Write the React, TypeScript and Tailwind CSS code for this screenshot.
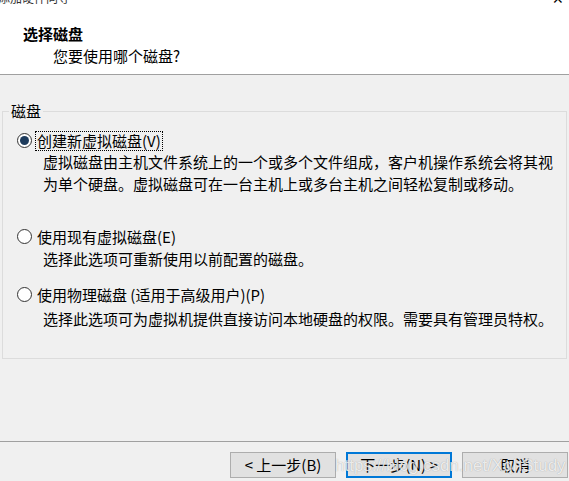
import React from 'react';

// Radio option in the disk wizard
const Radio = ({ checked }: { checked?: boolean }) => (
  <span className="flex h-[15px] w-[15px] flex-shrink-0 items-center justify-center rounded-full border border-[#333333] bg-white">
    {checked && <span className="h-[9px] w-[9px] rounded-full bg-[#1d3b5c]" />}
  </span>
);

const options = [
  {
    label: '创建新虚拟磁盘(V)',
    checked: true,
    desc: ['虚拟磁盘由主机文件系统上的一个或多个文件组成，客户机操作系统会将其视', '为单个硬盘。虚拟磁盘可在一台主机上或多台主机之间轻松复制或移动。'],
    rowMt: 'mt-[8px]',
    descMt: 'mt-0',
  },
  {
    label: '使用现有虚拟磁盘(E)',
    desc: ['选择此选项可重新使用以前配置的磁盘。'],
    rowMt: 'mt-[31px]',
    descMt: 'mt-[1px]',
  },
  {
    label: '使用物理磁盘 (适用于高级用户)(P)',
    desc: ['选择此选项可为虚拟机提供直接访问本地硬盘的权限。需要具有管理员特权。'],
    rowMt: 'mt-[14px]',
    descMt: 'mt-[3px]',
  },
];

export default function App() {
  return (
    <div
      className="relative h-[481px] w-[569px] overflow-hidden bg-[#f0f0f0] text-[15px] leading-[22px] text-black"
      style={{ fontFamily: '"Microsoft YaHei", "Noto Sans CJK SC", "Noto Sans", sans-serif' }}
    >
      {/* header */}
      <div className="h-[84px] border-b border-[#a0a0a0] bg-white">
        <div className="-mt-[9px] flex h-[14px] items-center justify-between pr-[5px] text-[12px] leading-[14px]">
          <span className="-ml-[2px] text-[#333]">添加硬件向导</span>
          <span className="text-[14px] text-black">✕</span>
        </div>
        <div className="ml-[23px] mt-[19px] font-bold leading-[20px]">选择磁盘</div>
        <div className="ml-[53px] mt-[2px] leading-[20px]">您要使用哪个磁盘?</div>
      </div>

      <fieldset className="ml-[2px] mt-[25px] h-[259px] w-[565px] border border-[#dcdcdc]">
        <legend className="ml-[6px] px-[2px] leading-[22px]">磁盘</legend>
        {options.map((o) => (
          <div key={o.label}>
            <div className={`${o.rowMt} flex h-[21px] items-center pl-[14px]`}>
              <Radio checked={o.checked} />
              <span
                className={`ml-[3px] px-[1px] leading-[18px] ${o.checked ? 'border border-dotted border-black' : 'border border-transparent'}`}
              >
                {o.label}
              </span>
            </div>
            <div className={`${o.descMt} pl-[40px]`}>
              {o.desc.map((d) => (
                <div key={d}>{d}</div>
              ))}
            </div>
          </div>
        ))}
      </fieldset>

      {/* footer */}
      <div className="mt-[82px] border-t border-[#a0a0a0]">
        <div className="mt-[10px] flex justify-end gap-[10px] pr-[1px]">
          <button className="h-[26px] w-[106px] border border-[#adadad] bg-[#e1e1e1] leading-[22px]">&lt; 上一步(B)</button>
          <button className="h-[26px] w-[106px] border-2 border-[#0078d7] bg-[#e1e1e1] leading-[20px]">下一步(N) &gt;</button>
          <button className="h-[26px] w-[106px] border border-[#adadad] bg-[#e1e1e1] leading-[22px]">取消</button>
        </div>
      </div>

      {/* watermark */}
      <div
        className="pointer-events-none absolute left-[335px] top-[455px] text-[17px] leading-[22px] text-white/80 [text-shadow:0_0_1px_rgba(0,0,0,0.35)]"
        style={{ fontFamily: '"Liberation Sans", Arial, sans-serif' }}
      >
        https://blog.csdn.net/XqhStudy
      </div>
    </div>
  );
}
